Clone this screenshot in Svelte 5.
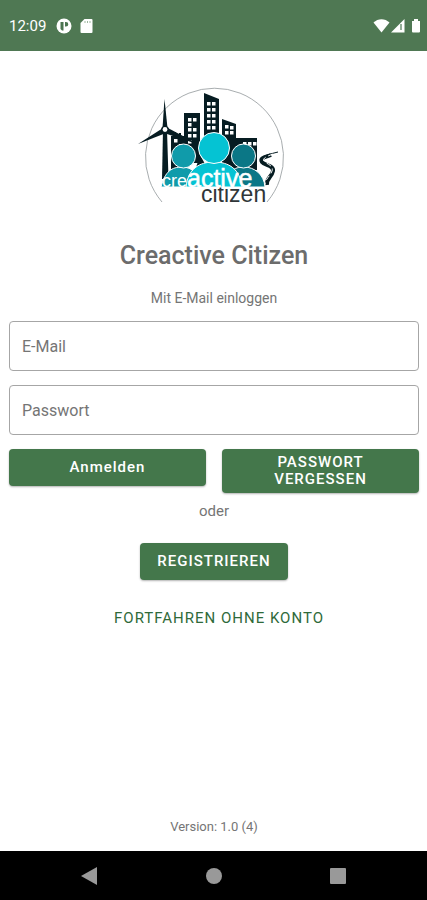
<script lang="ts">
  let email = $state('');
  let password = $state('');

  // window openings of the skyline, as [x, y]
  const openings = [
    [188, 118], [193, 118], [188, 123], [188, 128], [193, 128], [188, 134], [193, 134], [188, 140],
    [207, 102], [212, 102], [207, 108], [212, 108], [207, 114], [212, 114],
    [207, 120], [212, 120], [207, 126], [212, 126],
    [225, 125], [230, 126], [225, 131], [230, 131],
    [243, 142], [248, 142], [253, 142], [174, 139], [179, 144], [174, 148]
  ];

  function login(event: SubmitEvent) {
    event.preventDefault();
  }
</script>

<div class="screen">
  <header class="status-bar">
    <span class="clock">12:09</span>
    <svg width="16" height="16" viewBox="0 0 16 16" aria-hidden="true">
      <circle cx="8" cy="8" r="7.500" fill="#fff" />
      <path d="M4.500 4h3v8.500h-1.500L4.500 11z M9 4h1a2.300 2.300 0 0 1 0 4.600H9z" fill="#4b7450" />
    </svg>
    <svg class="card-icon" width="13" height="14" viewBox="0 0 13 14" aria-hidden="true">
      <path d="M4.500 0H11.500a1 1 0 0 1 1 1V13a1 1 0 0 1-1 1H1.500a1 1 0 0 1-1-1V4z" fill="#fff" />
      <path d="M5 2v2M7.500 2v2M10 2v2" stroke="#9db79f" />
    </svg>
    <svg class="signals" width="48" height="16" viewBox="0 0 48 16" aria-hidden="true">
      <path d="M0.500 4.500C5 0 12 0 16.500 4.500L8.500 14.500z" fill="#fff" />
      <path d="M31.500 1V14.500H18z" fill="#fff" />
      <path d="M28 6v6" stroke="#6f9274" stroke-width="1.500" />
      <path d="M41 1h4v2h2v10.500a1 1 0 0 1-1 1h-6a1 1 0 0 1-1-1V3h2z" fill="#fff" />
    </svg>
  </header>

  <main>
    <svg class="logo" width="160" height="124" viewBox="134 84 160 124" role="img" aria-label="Creactive Citizen Logo">
      <path d="M162 202A69 69 0 1 1 267 202" fill="none" stroke="#92989a" stroke-width="0.8" />
      <g fill="#061c22">
        <path d="M171 136h3v-4h2v4h3v-3h2v3h3v34h-13z" />
        <path d="M184 113h16v50h-16z" />
        <path d="M204 93l15 6v50h-15z" />
        <path d="M222 119l14 5v14h21v32h-35z" />
        <path d="M200 155l-8 25h22z" />
      </g>
      {#each openings as [x, y]}
        <rect {x} {y} width="3.500" height="3.500" fill="#fff" />
      {/each}
      <g fill="none" stroke="#061c22">
        <path d="M278 152C270 154 261 156 261 160" />
        <path d="M271 155C266 157 259 158 262 162S274 165 273 171S266 178 267 185" stroke-width="4" />
      </g>
      <path d="M273 154C268 156 262 158 264 161S274 165 272 171S265 178 265 186" fill="none" stroke="#fff" stroke-dasharray="5 3" />

      <g fill="#061c22">
        <path d="M163 130h4l1.500 49h-6.500z" />
        <path d="M162.500 128l2-29 3 29z" />
        <path d="M163 128l-25 16 28-11z" />
        <path d="M166 127l34 18-36-12z" />
        <circle cx="165" cy="130" r="4" />
      </g>
      <circle cx="165" cy="129.500" r="2.400" fill="#fff" />

      <text class="logo-text" x="201" y="202" font-size="23" fill="#303638">citizen</text>
      <g stroke="#fff">
        <path d="M161 187C165 171 172 167 182 167S200 174 201 187z" fill="#109baa" />
        <circle cx="183.500" cy="156" r="12" fill="#109baa" />
        <path d="M225 187C227 171 234 167 244 167S264 174 265 187z" fill="#0b7786" />
        <circle cx="243.500" cy="156" r="12" fill="#0b7786" />
        <path d="M186 187C188 169 199 162 214 162S240 169 242 187z" fill="#05c3d3" />
        <circle cx="214" cy="148" r="15.500" fill="#05c3d3" />
      </g>
      <text class="logo-text" x="162" y="187" font-size="18" fill="#fff">cre</text>
      <text class="logo-text strong" x="187" y="187" font-size="25">active</text>
    </svg>

    <h1>Creactive Citizen</h1>

    <form onsubmit={login}>
      <p class="hint">Mit E-Mail einloggen</p>
      <input type="email" aria-label="E-Mail" placeholder="E-Mail" bind:value={email} />
      <input type="password" aria-label="Passwort" placeholder="Passwort" bind:value={password} />
      <div class="actions">
        <button type="submit" class="filled">Anmelden</button>
        <button type="button" class="filled upper">Passwort vergessen</button>
      </div>
    </form>

    <p class="or">oder</p>
    <button type="button" class="filled upper">Registrieren</button>
    <button type="button" class="plain upper">Fortfahren ohne Konto</button>

    <p class="version">Version: 1.0 (4)</p>
  </main>

  <nav class="nav-bar" aria-label="System">
    <button type="button" aria-label="Zurück">
      <svg width="18" height="18" viewBox="0 0 18 18"><path d="M1 9L17 0V18z" fill="#999" /></svg>
    </button>
    <button type="button" aria-label="Startbildschirm">
      <svg width="18" height="18" viewBox="0 0 18 18"><circle cx="9" cy="9" r="8" fill="#999" /></svg>
    </button>
    <button type="button" aria-label="Übersicht">
      <svg width="18" height="18" viewBox="0 0 18 18"><rect x="1" y="1" width="16" height="16" rx="1" fill="#999" /></svg>
    </button>
  </nav>
</div>

<style>
  :global(body) {
    margin: 0;
    background: #fff;
  }

  .screen {
    display: flex;
    flex-direction: column;
    min-height: 100vh;
    font-family: Roboto, sans-serif;
    color: #757575;
  }

  .status-bar {
    display: flex;
    align-items: center;
    box-sizing: border-box;
    height: 51px;
    padding: 0 6px 0 9px;
    background: #4f7853;
    color: #fff;
  }

  .clock {
    margin-right: 10px;
    font-size: 15px;
  }

  .card-icon {
    margin-left: 8px;
  }

  .signals {
    margin-left: auto;
  }

  main {
    flex: 1;
    display: flex;
    flex-direction: column;
    align-items: center;
    padding: 33px 8px 16px 9px;
  }

  .logo-text {
    font-family: "Liberation Sans", sans-serif;
  }

  .strong {
    fill: #fff;
    stroke: #fff;
    stroke-width: 0.5;
  }

  h1 {
    margin: 32px 0 16px;
    font-size: 25px;
    line-height: 32px;
    font-weight: 500;
    color: #6c6c6c;
  }

  p {
    margin: 0;
    font-size: 14px;
    line-height: 20px;
    text-align: center;
  }

  form {
    display: flex;
    flex-direction: column;
    gap: 14px;
    align-self: stretch;
  }

  .hint {
    margin-bottom: -1px;
  }

  input {
    box-sizing: border-box;
    width: 100%;
    height: 50px;
    padding: 0 12px;
    border: 1px solid #a6a6a6;
    border-radius: 4px;
    background: #fff;
    font-family: inherit;
    font-size: 16px;
    color: #333;
  }

  input::placeholder {
    color: #757575;
    opacity: 1;
  }

  .actions {
    display: grid;
    grid-template-columns: 1fr 1fr;
    align-items: start;
    gap: 16px;
  }

  button {
    border: none;
    background: none;
    font-family: inherit;
    font-size: 15px;
    line-height: 17px;
    letter-spacing: 1px;
    cursor: pointer;
  }

  .upper {
    text-transform: uppercase;
  }

  .filled {
    min-height: 37px;
    padding: 5px 17px;
    border-radius: 4px;
    background: #44774b;
    box-shadow: 0 1px 2px rgba(0, 0, 0, 0.3);
    color: #fff;
    font-weight: 500;
  }

  .or {
    margin: 8px 0 22px;
    font-size: 15px;
  }

  .plain {
    margin-top: 20px;
    padding: 10px 16px 10px 26px;
    color: #2f6a3a;
  }

  .version {
    margin-top: auto;
    font-size: 13px;
    line-height: 16px;
  }

  .nav-bar {
    display: flex;
    justify-content: space-between;
    align-items: center;
    box-sizing: border-box;
    height: 49px;
    padding: 0 80px;
    background: #000;
  }

  .nav-bar button {
    display: flex;
    padding: 0;
  }
</style>
